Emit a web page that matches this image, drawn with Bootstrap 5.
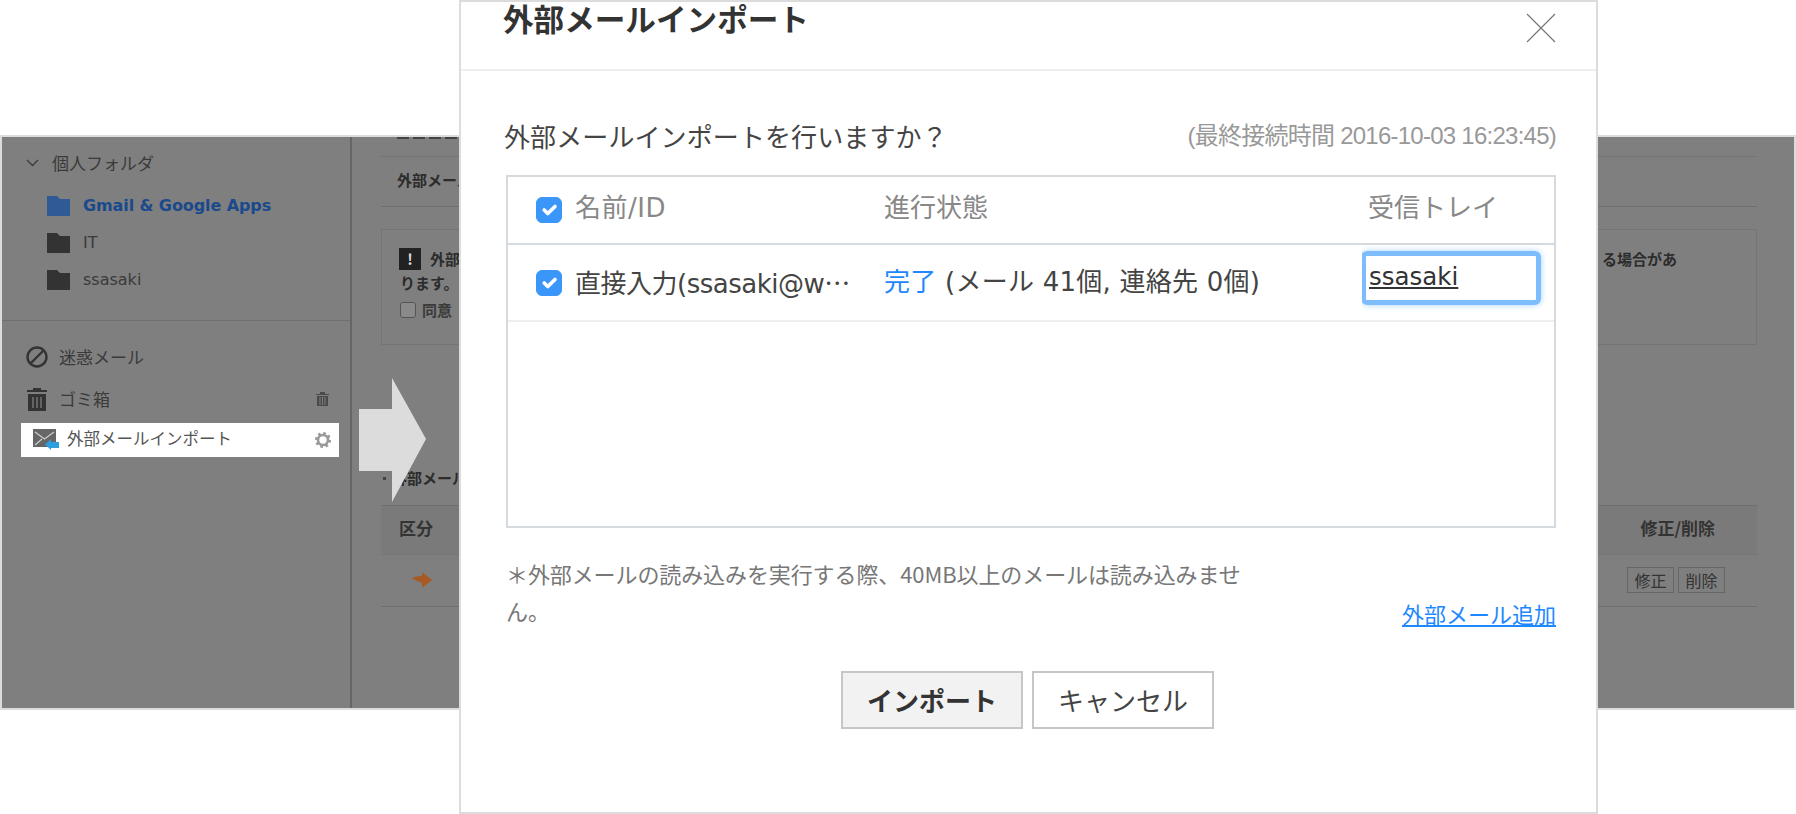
<!DOCTYPE html>
<html lang="ja">
<head>
<meta charset="utf-8">
<title>外部メールインポート</title>
<link href="https://cdn.jsdelivr.net/npm/bootstrap@5.3.0/dist/css/bootstrap.min.css" rel="stylesheet">
<style>
html,body{height:814px;overflow:hidden;background:#fff}
body{font-family:"Noto Sans CJK JP","Liberation Sans",sans-serif;color:#333;position:relative}
.stage{padding-top:135px}
.backdrop{height:575px;border:2px solid #dcdcdc;background:#7f7f7f;color:#2c2c2c;overflow:hidden}
.side{width:350px;flex:none;border-right:2px solid #666;font-size:17px;color:#3a3a3a}
.side-top{height:184px;padding:14px 0 0 24px;border-bottom:1px solid #707070}
.tree-head{height:24px;gap:13px}
.tree-list{padding:12px 0 0 21px;margin:0;list-style:none}
.tree-list li{height:37px;gap:13px;font-family:"DejaVu Sans","Noto Sans CJK JP",sans-serif;font-size:16px}
.tree-list .sel{color:#1a4a8c;font-weight:700;letter-spacing:-.1px}
.side-bot{padding:15px 21px 0 24px}
.side-row{height:42px;gap:11px}
.side-cur{background:#fff;color:#555;height:34px;margin:3px 0 0 -5px;width:318px;padding:0 8px 0 12px;font-size:16.5px;gap:8px}
.side-cur span{padding-bottom:3px}
.mail-mark{margin-top:-1px}
.ms-push{margin-left:auto}
.pane{flex:1;padding:0 37px 0 29px;font-size:15px;min-width:0}
.clip-row{height:20px;overflow:hidden;border-bottom:1px solid #737373;padding:0 0 0 16px}
.clip-bar{width:64px;height:2px;background:repeating-linear-gradient(90deg,#444 0 12px,#7f7f7f 12px 16px)}
.head-row{height:50px;border-bottom:1px solid #6f6f6f;padding:0 0 2px 16px;font-weight:700}
.notice{height:116px;margin-top:22px;border:1px solid #747474;padding:17px 79px 0 18px;font-weight:700;line-height:24px}
.warn{width:22px;height:22px;background:#222;color:#ddd;font-size:15px;line-height:22px;text-align:center;margin-right:9px;margin-left:-1px}
.fake-check{width:16px;height:16px;border:1px solid #555;background:#8a8a8a;border-radius:3px;margin-right:6px}
.notice-opt{font-weight:700;color:#3a3a3a;margin-top:3px;font-size:15px}
.sect{margin-top:115px;height:45px;font-weight:700;padding:0 0 9px 2px;gap:6px}
.dot-mark{width:3px;height:3px;background:#444}
.grid-head{height:50px;background:#7a7a7a;border-top:1px solid #6f6f6f;border-bottom:1px solid #757575;font-weight:700;padding:0 42px 4px 18px;font-size:17px;color:#333}
.grid-row{height:52px;border-bottom:1px solid #6f6f6f;padding:0 32px 2px 31px}
.mini-btn{border:1px solid #666;height:26px;width:47px;line-height:24px;text-align:center;font-size:16px;color:#333}
.arrow-over{position:absolute;left:359px;top:378px;width:67px;height:124px;color:#dcdcdc}
.dlg{position:absolute;left:459px;top:0;width:1139px;height:814px;background:#fff;border:2px solid #dcdcdc;border-radius:0;display:flex;flex-direction:column}
.dlg .modal-header{height:69px;padding:0 40px 0 42px;border-bottom:2px solid #eee;border-radius:0;align-items:flex-start}
.dlg-title{font-size:30.600px;font-weight:700;line-height:32px;margin:0;color:#333}
.dlg-x{width:30px;height:30px;margin-top:11px;background:none;border:0;padding:0;color:#777}
.dlg-main{padding:45px 40px 0 43px}
.ask{font-size:26px;line-height:40px;color:#444;letter-spacing:.1px}
.last-conn{font-family:"Liberation Sans","Noto Sans CJK JP",sans-serif;font-size:24px;color:#999;letter-spacing:-.75px}
.tray{height:353px;margin:19px 0 0 2px;border:2px solid #d5dade}
.tray .table{table-layout:fixed;margin:0;font-size:26px;--bs-table-border-color:#eee}
.tray th,.tray td{padding:0 0 0 6px;vertical-align:middle;font-weight:400;white-space:nowrap;overflow:hidden}
.tray th:first-child,.tray td:first-child{padding-left:28px}
.tray thead th{height:67px;color:#888;font-size:26px;border-bottom:2px solid #d5dade;padding-bottom:4px;font-family:"DejaVu Sans","Noto Sans CJK JP",sans-serif}
.tray thead .form-check-input{margin-top:3px}
.name-head{letter-spacing:.5px}
.tray tbody td{height:77px;color:#444;border-bottom:2px solid #eee}
.name-cell{gap:13px}
.tray .form-check-input{width:26px;height:26px;margin:0;border-radius:6px;background-color:#3a97f9;border-color:#3a97f9;flex:none}
.trunc{font-family:"DejaVu Sans","Noto Sans CJK JP",sans-serif;font-size:26px;overflow:hidden;white-space:nowrap;width:290px;letter-spacing:-.5px}
.trunc-dots{font-family:"Noto Sans CJK JP",sans-serif}
.done{color:#1e88ff}
.prog{font-family:"DejaVu Sans","Noto Sans CJK JP",sans-serif;font-size:26px!important;letter-spacing:.25px}
.tray-input{width:180px;height:54px;border:5px solid #7dbcfd;border-radius:6px;padding:0 0 0 3px;margin:-10px 0 0 -1px;font-family:"DejaVu Sans",sans-serif;font-size:24.500px;color:#333;text-decoration:underline;box-shadow:0 0 6px #a9d4ff}
.foot-note{font-size:22px;line-height:36.500px;color:#777;width:745px;margin:27px 0 0 2px;letter-spacing:-.1px}
.add-link{font-size:22px;color:#1e88ff;line-height:40px;margin-bottom:-5px}
.act{gap:9px;margin-top:43px;padding-right:5px}
.act .btn{width:182px;height:58px;border:2px solid #c6c6c6;border-radius:0;font-size:26px;line-height:1;padding:0;color:#444;background:#fff}
.act .btn.go{background:#f2f2f2;font-weight:700;color:#333}
</style>
</head>
<body>
<div class="stage">
  <div class="backdrop d-flex">
    <aside class="side">
      <div class="side-top">
        <div class="tree-head d-flex align-items-center">
          <svg width="13" height="8" viewBox="0 0 13 8"><path d="M1 1l5.500 5.500L12 1" fill="none" stroke="#3a3a3a" stroke-width="1.300"/></svg>
          <span>個人フォルダ</span>
        </div>
        <ul class="tree-list">
          <li class="sel d-flex align-items-center"><svg width="23" height="20" viewBox="0 0 23 20"><path d="M0 0h10l3 3h10v17H0z" fill="#2f5a96"/></svg><span>Gmail &amp; Google Apps</span></li>
          <li class="d-flex align-items-center"><svg width="23" height="20" viewBox="0 0 23 20"><path d="M0 0h10l3 3h10v17H0z" fill="#333"/></svg><span>IT</span></li>
          <li class="d-flex align-items-center"><svg width="23" height="20" viewBox="0 0 23 20"><path d="M0 0h10l3 3h10v17H0z" fill="#333"/></svg><span>ssasaki</span></li>
        </ul>
      </div>
      <div class="side-bot">
        <div class="side-row d-flex align-items-center">
          <svg width="22" height="22" viewBox="0 0 22 22"><circle cx="11" cy="11" r="9.500" fill="none" stroke="#333" stroke-width="2.400"/><path d="M5 17L17 5" stroke="#333" stroke-width="2.400"/></svg>
          <span>迷惑メール</span>
        </div>
        <div class="side-row d-flex align-items-center">
          <svg width="22" height="24" viewBox="0 0 22 24"><path d="M1 3h6V1h8v2h6v2H1z" fill="#333"/><path d="M2 7h18v17H2z" fill="#333"/><path d="M7 10v11M11 10v11M15 10v11" stroke="#7f7f7f" stroke-width="1.300"/></svg>
          <span>ゴミ箱</span>
          <svg class="ms-push" width="13" height="14" viewBox="0 0 13 14"><path d="M0 2h4V0h5v2h4v1H0zM1 4h11v10H1z" fill="#4a4a4a"/><path d="M4 5v8M6.500 5v8M9 5v8" stroke="#7f7f7f"/></svg>
        </div>
        <div class="side-cur d-flex align-items-center">
          <svg class="mail-mark" width="26" height="21" viewBox="0 0 26 21"><path d="M0 0h23v18H0z" fill="#666"/><path d="M2 3l9.500 7L21 3M2 16l7-6" stroke="#ccc" stroke-width="1.300" fill="none"/><path d="M12 15.500l6-5.500v3h8v6h-8v2z" fill="#2d9fe0"/></svg>
          <span>外部メールインポート</span>
          <svg class="ms-push" width="16" height="16" viewBox="0 0 16 16"><circle cx="8" cy="8" r="5" fill="none" stroke="#999" stroke-width="2.600"/><circle cx="8" cy="8" r="6.700" fill="none" stroke="#999" stroke-width="2.600" stroke-dasharray="2.600 2.660"/></svg>
        </div>
      </div>
    </aside>
    <main class="pane">
      <div class="clip-row"><div class="clip-bar"></div></div>
      <div class="head-row d-flex align-items-center">外部メールインポート</div>
      <div class="notice">
        <div class="d-flex align-items-center justify-content-between">
          <div class="d-flex align-items-center"><span class="warn">!</span><span>外部メールインポート</span></div>
          <span>る場合があ</span>
        </div>
        <div>ります。</div>
        <div class="notice-opt d-flex align-items-center"><span class="fake-check"></span>同意</div>
      </div>
      <div class="sect d-flex align-items-center"><span class="dot-mark"></span>外部メールインポート</div>
      <div class="grid-head d-flex align-items-center justify-content-between"><span>区分</span><span>修正/削除</span></div>
      <div class="grid-row d-flex align-items-center justify-content-between">
        <svg width="20" height="16" viewBox="0 0 20 16"><path d="M0 7C3 4 6 4 10 4V0l10 8-10 8v-5C6 9 3 8 0 7z" fill="#a85a24"/></svg>
        <div class="d-flex gap-1 ms-auto"><span class="mini-btn">修正</span><span class="mini-btn">削除</span></div>
      </div>
    </main>
  </div>
</div>

<svg class="arrow-over" viewBox="0 0 67 124"><path d="M33 0l34 61-34 63V93H0V31h33z" fill="currentColor"/></svg>

<section class="dlg">
  <header class="modal-header d-flex justify-content-between">
    <h1 class="dlg-title">外部メールインポート</h1>
    <button class="dlg-x" type="button" aria-label="閉じる"><svg width="30" height="30" viewBox="0 0 30 30"><path d="M1 1l28 28M29 1L1 29" stroke="currentColor" stroke-width="1.200"/></svg></button>
  </header>
  <div class="dlg-main">
    <div class="d-flex justify-content-between align-items-center">
      <div class="ask">外部メールインポートを行いますか？</div>
      <div class="last-conn">(最終接続時間 2016-10-03 16:23:45)</div>
    </div>
    <div class="tray">
      <table class="table">
        <colgroup><col style="width:370px"><col style="width:484px"><col></colgroup>
        <thead><tr>
          <th><div class="name-cell d-flex align-items-center"><input class="form-check-input" type="checkbox" checked><span class="name-head">名前/ID</span></div></th>
          <th>進行状態</th>
          <th>受信トレイ</th>
        </tr></thead>
        <tbody><tr>
          <td><div class="name-cell d-flex align-items-center"><input class="form-check-input" type="checkbox" checked><span class="trunc">直接入力(ssasaki@w<span class="trunc-dots">⋯</span></span></div></td>
          <td class="prog"><span class="done">完了</span> (メール 41個, 連絡先 0個)</td>
          <td class="p-0"><div class="tray-input d-flex align-items-center">ssasaki</div></td>
        </tr></tbody>
      </table>
    </div>
    <div class="d-flex justify-content-between align-items-end">
      <p class="foot-note mb-0">＊外部メールの読み込みを実行する際、40MB以上のメールは読み込みません。</p>
      <a class="add-link" href="#">外部メール追加</a>
    </div>
    <div class="act d-flex justify-content-center">
      <button class="btn go" type="button">インポート</button>
      <button class="btn" type="button">キャンセル</button>
    </div>
  </div>
</section>
<script src="https://cdn.jsdelivr.net/npm/bootstrap@5.3.0/dist/js/bootstrap.bundle.min.js"></script>
</body>
</html>
